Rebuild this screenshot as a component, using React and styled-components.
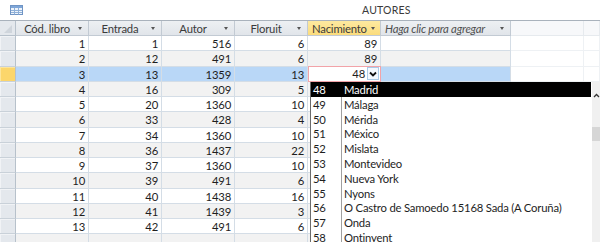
import React from 'react'
import styled, { createGlobalStyle, css } from 'styled-components'

const GlobalStyle = createGlobalStyle`
  html, body {
    margin: 0;
    padding: 0;
    background: #ffffff;
    overflow: hidden;
  }
  body {
    font-family: Lato, 'Liberation Sans', Arial, sans-serif;
    font-size: 11.3px;
    letter-spacing: -0.2px;
    color: #1e1e1e;
  }
`

const COLS = '16px 73px 73px 73px 73px 73px 130px 73px 1fr'
const ROW_H = '15.25px'

const Page = styled.div`
  position: relative;
  width: 600px;
  height: 242px;
  overflow: hidden;
`

const TitleBar = styled.div`
  display: flex;
  align-items: center;
  height: 20px;
  padding-left: 10px;
  box-sizing: border-box;
`

const Title = styled.span`
  margin-left: 339px;
  font-size: 10.5px;
  letter-spacing: 0.2px;
  color: #3a3a3a;
`

const Table = styled.div`
  border-top: 1px solid #a9b2bc;
`

const Row = styled.div`
  display: grid;
  grid-template-columns: ${COLS};
  height: ${(p) => (p.$head ? '15px' : ROW_H)};
`

const rowBg = (p) => {
  if (p.$selected) return '#b9d7f7'
  if (p.$even) return '#f2f2f2'
  return '#ffffff'
}

const Cell = styled.div`
  box-sizing: border-box;
  border-right: 1px solid #d4dde6;
  border-bottom: 1px solid #d4dde6;
  background: ${rowBg};
  text-align: right;
  padding-right: 3px;
  line-height: 15px;
  white-space: nowrap;
  overflow: hidden;
`

const Spare = styled.div`
  box-sizing: border-box;
  border-right: 1px solid #eef1f4;
  border-bottom: 1px solid #eef1f4;
  background: #ffffff;
`

const Selector = styled.div`
  box-sizing: border-box;
  border-right: 1px solid #b7c1cb;
  border-bottom: 1px solid #c9d1d9;
  background: ${(p) => (p.$current ? '#fcd66b' : '#e4e8ed')};
  box-shadow: inset 1px 1px 0 ${(p) => (p.$current ? '#fde59b' : '#f1f3f6')};
`

const Corner = styled.div`
  box-sizing: border-box;
  position: relative;
  border-right: 1px solid #b7c1cb;
  border-bottom: 1px solid #b7c1cb;
  background: #e4e8ed;
  &::after {
    content: '';
    position: absolute;
    right: 3px;
    bottom: 2px;
    border-left: 8px solid transparent;
    border-bottom: 8px solid #cfd5dc;
  }
`

const Head = styled.div`
  box-sizing: border-box;
  display: flex;
  align-items: center;
  border-right: 1px solid #c2cad3;
  border-bottom: 1px solid #c2cad3;
  background: ${(p) => (p.$active ? 'linear-gradient(#fde9a0, #fbdc7c)' : 'linear-gradient(#edf0f3, #e1e5ea)')};
  color: #3b3b3b;
  padding: 0 6px 0 4px;
  white-space: nowrap;
  ${(p) =>
    p.$italic &&
    css`
      font-style: italic;
      color: #505050;
    `}
`

const HeadLabel = styled.span`
  flex: 1;
  text-align: ${(p) => (p.$left ? 'left' : 'center')};
`

const Caret = styled.span`
  width: 0;
  height: 0;
  border-left: 2.5px solid transparent;
  border-right: 2.5px solid transparent;
  border-top: 3px solid #555;
  margin-left: 4px;
`

const HeadSpare = styled.div`
  box-sizing: border-box;
  border-right: 1px solid #e6eaee;
  border-bottom: 1px solid #e6eaee;
  background: #f7f8fa;
`

const EditCell = styled.div`
  box-sizing: border-box;
  display: flex;
  align-items: center;
  justify-content: flex-end;
  background: #ffffff;
  border: 1px solid #f2a3a8;
  margin-top: -1px;
  padding-right: 1px;
  gap: 2px;
`

const DropButton = styled.div`
  box-sizing: border-box;
  width: 12px;
  height: 13px;
  border: 1px solid #aacbe8;
  background: #f4f9fe;
  display: flex;
  align-items: center;
  justify-content: center;
`

const Dropdown = styled.div`
  position: absolute;
  left: 310px;
  top: 82px;
  width: 290px;
  bottom: 0;
  background: #ffffff;
  border-left: 1px solid #6b6b6b;
  display: flex;
`

const List = styled.div`
  flex: 1;
  position: relative;
  &::before {
    content: '';
    position: absolute;
    left: 30px;
    top: 0;
    bottom: 0;
    border-left: 1px solid #a0a0a0;
  }
`

const Item = styled.div`
  display: grid;
  grid-template-columns: 30px 1fr;
  height: 14.8px;
  line-height: 15px;
  background: ${(p) => (p.$active ? '#000000' : 'transparent')};
  color: ${(p) => (p.$active ? '#ffffff' : '#1e1e1e')};
  position: relative;
  z-index: 1;
`

const ItemCode = styled.span`
  padding-left: 2px;
`

const ItemName = styled.span`
  padding-left: 3px;
  white-space: nowrap;
`

const Scrollbar = styled.div`
  width: 9px;
  background: #f0f0f0;
  display: flex;
  flex-direction: column;
  align-items: center;
  border-left: 1px solid #ffffff;
`

const ScrollArrow = styled.div`
  margin-top: 5px;
  height: 8px;
`

const Thumb = styled.div`
  margin-top: 32px;
  width: 9px;
  height: 14px;
  background: #d6d6d6;
`

const TableIcon = () => (
  <svg width="13" height="10" viewBox="0 0 13 10">
    <rect x="0.5" y="0.5" width="12" height="9" fill="#eef4fb" stroke="#6f94c4" />
    <rect x="1" y="1" width="11" height="2" fill="#7ea6d8" />
    <path d="M1 5.5H12M1 7.5H12M4.5 3V9.5M8.5 3V9.5" stroke="#8fb0d8" strokeWidth="1" />
  </svg>
)

const Chevron = () => (
  <svg width="8" height="6" viewBox="0 0 8 6">
    <path d="M1 1.5L4 4.5L7 1.5" fill="none" stroke="#111" strokeWidth="1.8" />
  </svg>
)

const UpArrow = () => (
  <svg width="7" height="5" viewBox="0 0 7 5">
    <path d="M1 4L3.5 1.5L6 4" fill="none" stroke="#333" strokeWidth="1.3" />
  </svg>
)

const rows = [
  [1, 1, 516, 6, 89],
  [2, 12, 491, 6, 89],
  [3, 13, 1359, 13, 48],
  [4, 16, 309, 5, ''],
  [5, 20, 1360, 10, ''],
  [6, 33, 428, 4, ''],
  [7, 34, 1360, 10, ''],
  [8, 36, 1437, 22, ''],
  [9, 37, 1360, 10, ''],
  [10, 39, 491, 6, ''],
  [11, 40, 1438, 16, ''],
  [12, 41, 1439, 3, ''],
  [13, 42, 491, 6, ''],
  ['', '', '', '', ''],
]

const places = [
  [48, 'Madrid'],
  [49, 'Málaga'],
  [50, 'Mérida'],
  [51, 'México'],
  [52, 'Mislata'],
  [53, 'Montevideo'],
  [54, 'Nueva York'],
  [55, 'Nyons'],
  [56, 'O Castro de Samoedo 15168 Sada (A Coruña)'],
  [57, 'Onda'],
  [58, 'Ontinyent'],
]

const headers = ['Cód. libro', 'Entrada', 'Autor', 'Floruit', 'Nacimiento']

export default function App() {
  return (
    <Page>
      <GlobalStyle />
      <TitleBar>
        <TableIcon />
        <Title>AUTORES</Title>
      </TitleBar>
      <Table>
        <Row $head>
          <Corner />
          {headers.map((h) => (
            <Head key={h} $active={h === 'Nacimiento'}>
              <HeadLabel>{h}</HeadLabel>
              <Caret />
            </Head>
          ))}
          <Head $italic>
            <HeadLabel $left>Haga clic para agregar</HeadLabel>
            <Caret />
          </Head>
          <HeadSpare />
          <HeadSpare />
        </Row>
        {rows.map((r, i) => {
          const selected = i === 2
          const even = i % 2 === 1
          return (
            <Row key={i}>
              <Selector $current={selected} />
              {r.slice(0, 4).map((v, j) => (
                <Cell key={j} $selected={selected} $even={even}>
                  {v}
                </Cell>
              ))}
              {selected ? (
                <EditCell>
                  <span>{r[4]}</span>
                  <DropButton>
                    <Chevron />
                  </DropButton>
                </EditCell>
              ) : (
                <Cell $even={even}>{r[4]}</Cell>
              )}
              <Cell $selected={selected} $even={even} />
              <Spare />
              <Spare />
            </Row>
          )
        })}
      </Table>
      <Dropdown>
        <List>
          {places.map(([code, name], i) => (
            <Item key={code} $active={i === 0}>
              <ItemCode>{code}</ItemCode>
              <ItemName>{name}</ItemName>
            </Item>
          ))}
        </List>
        <Scrollbar>
          <ScrollArrow>
            <UpArrow />
          </ScrollArrow>
          <Thumb />
        </Scrollbar>
      </Dropdown>
    </Page>
  )
}
